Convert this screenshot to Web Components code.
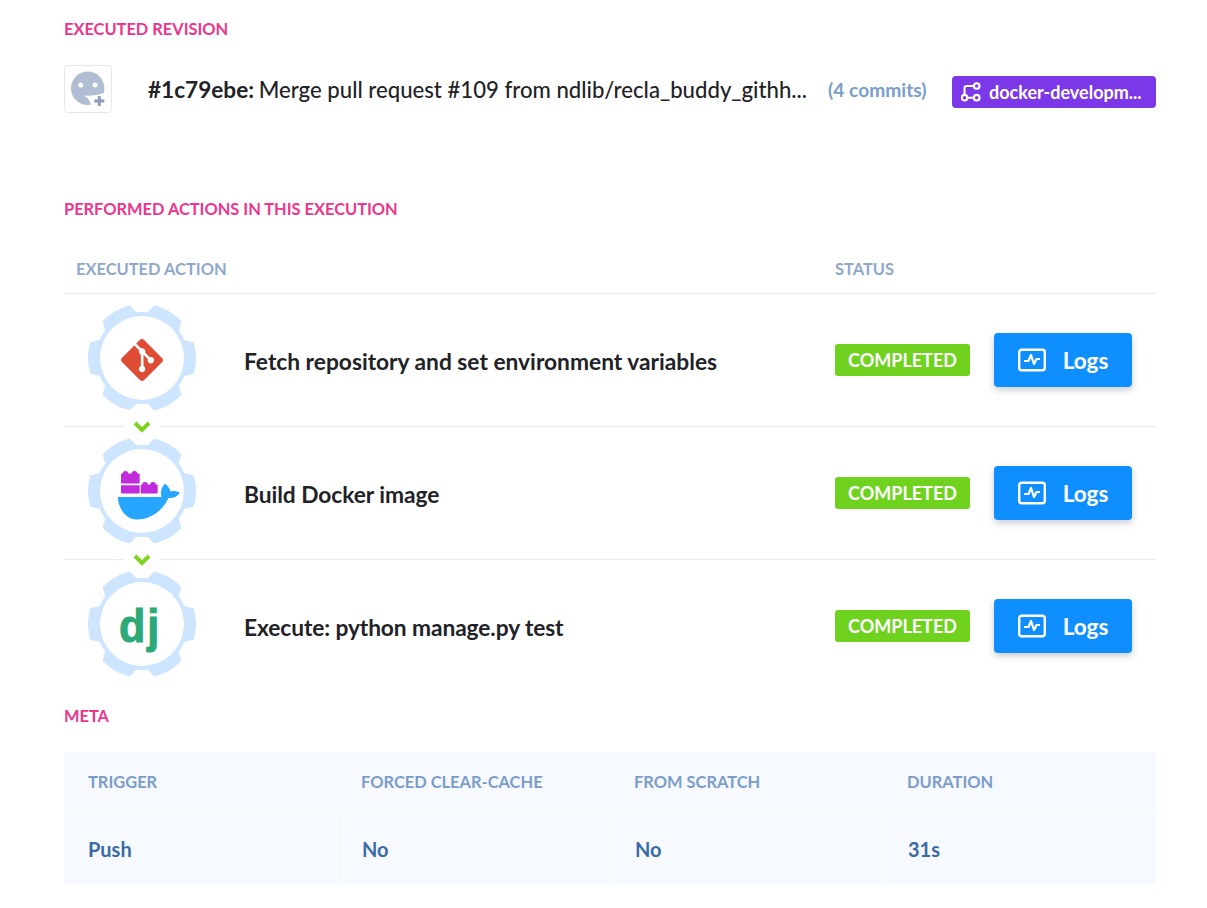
<!DOCTYPE html>
<html>
<head>
<meta charset="utf-8">
<title>Execution</title>
<style>
  html, body { margin: 0; background: #fff; }
  body { font-family: Lato, "Liberation Sans", sans-serif; color: #1f2327; }
</style>
</head>
<body>
<exec-page>
  <exec-revision></exec-revision>
  <action-table>
    <action-row icon="git" name="Fetch repository and set environment variables"></action-row>
    <action-row icon="docker" name="Build Docker image" chained style="--track:-.05px"></action-row>
    <action-row icon="django" name="Execute: python manage.py test" chained style="--track:-.1px"></action-row>
  </action-table>
  <meta-table></meta-table>
</exec-page>

<script>
"use strict";

const icons = {
  git: `<svg width="42" height="42" viewBox="0 0 24 24" style="margin-top:4px"><path fill="#de4c36" d="M23.546 10.93L13.067.452c-.604-.603-1.582-.603-2.188 0L8.708 2.627l2.76 2.76c.645-.215 1.379-.07 1.889.441.516.515.658 1.258.438 1.9l2.658 2.66c.645-.223 1.387-.078 1.9.435.721.72.721 1.884 0 2.604-.719.719-1.881.719-2.6 0-.539-.541-.674-1.337-.404-1.996L12.86 8.955v6.525c.176.086.342.203.488.348.713.721.713 1.883 0 2.6-.719.721-1.889.721-2.609 0-.719-.719-.719-1.879 0-2.598.182-.18.387-.316.605-.406V8.835c-.217-.091-.424-.222-.6-.401-.545-.545-.676-1.342-.396-2.009L7.636 3.7.45 10.881c-.6.605-.6 1.584 0 2.189l10.48 10.477c.604.604 1.582.604 2.186 0l10.43-10.43c.605-.603.605-1.582 0-2.187"/></svg>`,
  docker: `<svg width="66" height="52" viewBox="116 470 66 52" style="margin:10px 0 0 14px">
    <g fill="#c02bdb">
      <rect x="121" y="473.500" width="18.700" height="10" rx="1"/>
      <circle cx="125.500" cy="474" r="2.900"/><circle cx="134.500" cy="474" r="2.900"/>
      <rect x="121" y="485.300" width="18.700" height="8.300" rx="1"/>
      <rect x="140.700" y="484.500" width="17" height="9.100" rx="1"/>
      <circle cx="145" cy="484.800" r="2.800"/><circle cx="153" cy="484.800" r="2.800"/>
    </g>
    <path fill="#26a6ff" d="M117.700 497H161.500C160 492 161.500 487 165 483.500C168 486 170 489 170.500 491.500C173.500 490.500 177 491 179.800 493C177.500 496.500 173 498.500 168.500 498C163 510 151 519.500 137 519.500C126 519.500 118.500 509 117.700 497Z"/>
  </svg>`,
  branch: `<svg width="20" height="20" viewBox="0 0 20 20" fill="none" stroke="#fff" stroke-width="2.100"><circle cx="15.700" cy="4" r="2.800"/><circle cx="3.500" cy="15.700" r="2.800"/><circle cx="15.700" cy="15.700" r="2.800"/><path d="M6.300 15.700h6.600M3.500 12.900V6a2 2 0 0 1 2-2h7.400"/></svg>`,
  logs: `<svg width="28" height="24" viewBox="0 0 28 24" fill="none" stroke="#fff" stroke-width="2.400"><rect x="1.200" y="1.700" width="25.600" height="20.600" rx="2.500"/><path d="M6 13h4.500l2.500-6 3 9 2.500-5h3.500" stroke-width="2.200" stroke-linejoin="round"/></svg>`,
  avatar: `<svg width="48" height="48" viewBox="0 0 48 48"><circle cx="23.700" cy="23.300" r="16.700" fill="#b0bdd5"/><circle cx="16.700" cy="20" r="2.500" fill="#fff"/><circle cx="31" cy="20" r="2.500" fill="#fff"/><path fill="#fff" d="M20 30.500c6 .5 13 0 21.500-3V44H27c.5-5-1-10-7-13.500z"/><path fill="#8c9cb9" d="M33.800 31h3v3.500h3.500v3h-3.500V41h-3v-3.500h-3.500v-3h3.500z"/></svg>`
};

// six teeth, notches on the vertical axis
function gearPath(cx, cy) {
  const polar = (r, deg) => {
    const a = deg * Math.PI / 180;
    return [(cx + r * Math.cos(a)).toFixed(2), (cy + r * Math.sin(a)).toFixed(2)];
  };
  let d = "";
  for (let i = 0; i < 6; i++) {
    const mid = i * 60;
    d += `${i ? "L" : "M"}${polar(46, mid - 23)} L${polar(54, mid - 17)} A54 54 0 0 1 ${polar(54, mid + 17)} L${polar(46, mid + 23)} A46 46 0 0 1 ${polar(46, mid + 37)} `;
  }
  return d + "Z";
}

customElements.define("exec-page", class extends HTMLElement {
  constructor() {
    super();
    this.attachShadow({ mode: "open" }).innerHTML = `
      <style>
        :host { display: block; box-sizing: border-box; width: 1092px; margin-left: 64px; padding-top: 19px; }
      </style>
      <slot></slot>`;
  }
});

customElements.define("section-title", class extends HTMLElement {
  constructor() {
    super();
    this.attachShadow({ mode: "open" }).innerHTML = `
      <style>
        :host { display: block; font: 700 16.4px/19px Lato, sans-serif; color: #ec368d; text-transform: uppercase; }
      </style>
      <slot></slot>`;
  }
});

customElements.define("exec-revision", class extends HTMLElement {
  constructor() {
    super();
    this.attachShadow({ mode: "open" }).innerHTML = `
      <style>
        :host { display: block; height: 180px; }
        .row { display: flex; align-items: center; margin-top: 27px; height: 48px; }
        .avatar { box-sizing: border-box; width: 48px; height: 48px; border: 1px solid #e6e8ee; border-radius: 4px; flex: none; overflow: hidden; }
        .avatar svg { display: block; margin: -1px; }
        .msg { margin-left: 36px; font-size: 22.15px; font-weight: 500; width: 660px; white-space: nowrap; color: #1f2327; }
        .msg b { font-weight: 700; font-size: 22.6px; margin-right: -1px; }
        .commits { margin-left: 20px; width: 124px; font-size: 19.2px; font-weight: 700; color: #7b9dc9; white-space: nowrap; }
        .branch { flex: none; box-sizing: border-box; width: 204px; height: 32px; margin-top: 6px; background: #7c37e8; border-radius: 4px; color: #fff; font-size: 18px; font-weight: 700; display: flex; align-items: center; gap: 8px; padding-left: 9px; white-space: nowrap; }
        svg { flex: none; }
      </style>
      <section-title>Executed revision</section-title>
      <div class="row">
        <div class="avatar">${icons.avatar}</div>
        <div class="msg"><b>#1c79ebe:</b> Merge pull request #109 from ndlib/recla_buddy_githh...</div>
        <div class="commits">(4 commits)</div>
        <div class="branch">${icons.branch}<span>docker-developm...</span></div>
      </div>`;
  }
});

customElements.define("action-table", class extends HTMLElement {
  constructor() {
    super();
    this.attachShadow({ mode: "open" }).innerHTML = `
      <style>
        :host { display: block; }
        .head { display: flex; height: 56px; padding-top: 7px; margin-top: 20px; border-bottom: 1px solid #e3ecf7; align-items: center; font-size: 16.45px; line-height: 18px; font-weight: 700; color: #8fa8cb; text-transform: uppercase; box-sizing: border-box; }
        .a { margin-left: 12px; width: 759px; }
      </style>
      <section-title>Performed actions in this execution</section-title>
      <div class="head"><span class="a">Executed action</span><span>Status</span></div>
      <slot></slot>`;
  }
});

customElements.define("action-row", class extends HTMLElement {
  constructor() {
    super();
    const icon = this.getAttribute("icon");
    const art = icon === "django" ? `<span class="dj">dj</span>` : icons[icon];
    this.attachShadow({ mode: "open" }).innerHTML = `
      <style>
        :host { display: block; position: relative; box-sizing: border-box; height: 133px; border-bottom: 1px solid #e3ecf7; }
        :host(:last-child) { border-bottom: 0; height: 126px; }
        .row { display: flex; align-items: center; height: 132px; }
        .gear { position: relative; flex: none; width: 108px; height: 108px; margin: -4px 0 0 24px; }
        .gear svg.bg { display: block; }
        .art { position: absolute; inset: 0; display: flex; align-items: center; justify-content: center; }
        .dj { font: 700 43px/1 "Liberation Sans", sans-serif; color: #2ba977; -webkit-text-stroke: 1px #2ba977; letter-spacing: 2px; position: relative; top: 2px; left: -2px; transform: scaleY(1.06); }
        .name { flex: none; width: 591px; margin-left: 48px; font-size: 22.75px; font-weight: 700; letter-spacing: var(--track, 0); color: #1f2327; position: relative; top: 1px; white-space: nowrap; }
        .status { flex: none; box-sizing: border-box; width: 135px; height: 32px; background: #6fd21f; color: #fff; font-size: 18px; font-weight: 700; border-radius: 3px; display: flex; align-items: center; justify-content: center; }
        .logs { flex: none; box-sizing: border-box; width: 138px; height: 54px; margin-left: 24px; background: #0f8fff; color: #fff; border-radius: 4px; font-size: 22.5px; font-weight: 700; display: flex; align-items: center; justify-content: center; gap: 17px; box-shadow: 0 3px 7px rgba(30,50,80,.25); }
        .chev { position: absolute; left: 60px; top: -9px; width: 36px; height: 16px; background: #fff; display: flex; align-items: center; justify-content: center; }
      </style>
      ${this.hasAttribute("chained") ? `<div class="chev"><svg width="18" height="13" viewBox="0 0 18 13" fill="none" stroke="#7ed321" stroke-width="4"><path d="M2 3l7 7 7-7"/></svg></div>` : ""}
      <div class="row">
        <div class="gear">
          <svg class="bg" width="108" height="108" viewBox="0 0 108 108"><path fill="#cde5ff" d="${gearPath(54, 54)}"/><circle cx="54" cy="54" r="42" fill="#fff"/></svg>
          <div class="art">${art}</div>
        </div>
        <div class="name">${this.getAttribute("name")}</div>
        <div class="status">COMPLETED</div>
        <div class="logs">${icons.logs}<span>Logs</span></div>
      </div>`;
  }
});

customElements.define("meta-table", class extends HTMLElement {
  constructor() {
    super();
    const cols = [["Trigger", "Push"], ["Forced clear-cache", "No"], ["From scratch", "No"], ["Duration", "31s"]];
    this.attachShadow({ mode: "open" }).innerHTML = `
      <style>
        :host { display: block; }
        section-title { margin-top: 20px; }
        .grid { display: grid; grid-template-columns: repeat(4, 273px); margin-top: 27px; }
        .h, .v { background: #f6f9ff; padding-left: 24px; display: flex; align-items: center; box-sizing: border-box; }
        .h { height: 60px; font-size: 16.45px; font-weight: 700; color: #7b9dc9; text-transform: uppercase; }
        .v { height: 73px; border-top: 1px solid #fff; font-size: 20px; font-weight: 700; color: #3a6ba5; }
        .v + .v { border-left: 1px solid #fff; }
      </style>
      <section-title>Meta</section-title>
      <div class="grid">
        ${cols.map(c => `<div class="h">${c[0]}</div>`).join("")}
        ${cols.map(c => `<div class="v">${c[1]}</div>`).join("")}
      </div>`;
  }
});
</script>
</body>
</html>
